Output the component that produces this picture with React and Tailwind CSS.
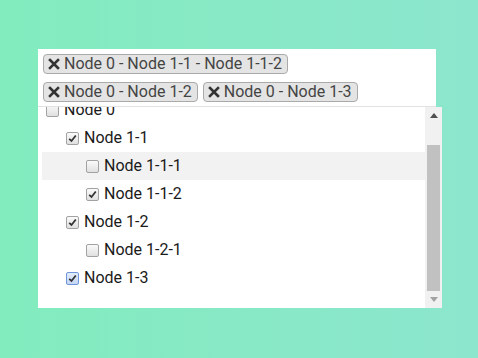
import React from 'react';

const tags = ['Node 0 - Node 1-1 - Node 1-1-2', 'Node 0 - Node 1-2', 'Node 0 - Node 1-3'];

const nodes = [
  { label: 'Node 0', level: 0, checked: false },
  { label: 'Node 1-1', level: 1, checked: true },
  { label: 'Node 1-1-1', level: 2, checked: false, hover: true },
  { label: 'Node 1-1-2', level: 2, checked: true },
  { label: 'Node 1-2', level: 1, checked: true },
  { label: 'Node 1-2-1', level: 2, checked: false },
  { label: 'Node 1-3', level: 1, checked: true, focus: true },
];

const indent = ['pl-[4px]', 'pl-[24px]', 'pl-[44px]'];

function Cross() {
  return (
    <svg width="12" height="12" viewBox="0 0 12 12" className="shrink-0">
      <path d="M2 2 L10 10 M10 2 L2 10" stroke="#333" strokeWidth="2.6" strokeLinecap="square" />
    </svg>
  );
}

function Box({ checked, focus }) {
  return (
    <span
      className={`w-[13px] h-[13px] rounded-[2px] border shrink-0 flex items-center justify-center ${
        focus
          ? 'border-[#6f96db] bg-gradient-to-b from-[#e3ecfb] to-[#c4d6f3]'
          : 'border-[#a2a2a2] bg-gradient-to-b from-[#fafafa] to-[#e0e0e0]'
      }`}
    >
      {checked && (
        <svg width="9" height="9" viewBox="0 0 9 9">
          <path d="M1.2 4.8 L3.5 7 L7.8 1.5" stroke="#333" strokeWidth="1.8" fill="none" />
        </svg>
      )}
    </span>
  );
}

export default function App() {
  return (
    <div
      className="w-[478px] h-[358px] bg-gradient-to-r from-[#82ecbe] to-[#8ce6cd] pt-[49px] pl-[38px]"
      style={{ fontFamily: 'Roboto, "Liberation Sans", sans-serif' }}
    >
      {/* selected tags */}
      <div className="w-[398px] h-[57px] bg-white p-[5px] flex flex-wrap content-start gap-x-[5px] gap-y-[8px]">
        {tags.map(t => (
          <span
            key={t}
            className="h-[20px] flex items-center gap-[4px] pl-[4px] pr-[5px] border border-[#aaaaaa] bg-[#e4e4e4] rounded-[4px] text-[16px] leading-none text-[#444]"
          >
            <Cross />
            {t}
          </span>
        ))}
      </div>
      <div className="w-[398px] h-px bg-[#e2e2e2]" />

      {/* dropdown tree */}
      <div className="w-[404px] h-[201px] bg-white flex">
        <div className="flex-1 overflow-hidden pl-[4px]">
          <div className="-mt-[11px]">
            {nodes.map(n => (
              <div
                key={n.label}
                className={`h-[28px] flex items-center gap-[5px] text-[16px] text-[#1a1a1a] ${indent[n.level]} ${
                  n.hover ? 'bg-[#f2f2f2]' : ''
                }`}
              >
                <Box checked={n.checked} focus={n.focus} />
                <span className="leading-none">{n.label}</span>
              </div>
            ))}
          </div>
        </div>

        {/* scrollbar */}
        <div className="w-[17px] bg-[#f1f1f1] flex flex-col">
          <div className="h-[17px] flex items-center justify-center">
            <svg width="8" height="5" viewBox="0 0 8 5">
              <path d="M0 5 L4 0 L8 5 Z" fill="#505050" />
            </svg>
          </div>
          <div className="flex-1 pt-[21px] px-[2px]">
            <div className="h-[146px] bg-[#c1c1c1]" />
          </div>
          <div className="h-[17px] flex items-center justify-center">
            <svg width="8" height="5" viewBox="0 0 8 5">
              <path d="M0 0 L8 0 L4 5 Z" fill="#a3a3a3" />
            </svg>
          </div>
        </div>
      </div>
    </div>
  );
}
